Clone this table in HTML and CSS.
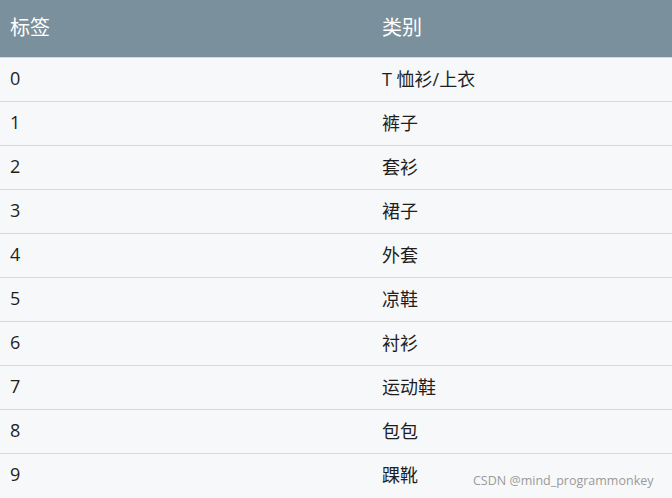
FILE: index.html
```html
<!DOCTYPE html>
<html lang="zh">
<head>
<meta charset="utf-8">
<link rel="stylesheet" href="styles.css">
</head>
<body>
<div class="table">
  <div class="row head"><div class="c1">标签</div><div class="c2">类别</div></div>
  <div class="row"><div class="c1">0</div><div class="c2">T 恤衫/上衣</div></div>
  <div class="row"><div class="c1">1</div><div class="c2">裤子</div></div>
  <div class="row"><div class="c1">2</div><div class="c2">套衫</div></div>
  <div class="row"><div class="c1">3</div><div class="c2">裙子</div></div>
  <div class="row"><div class="c1">4</div><div class="c2">外套</div></div>
  <div class="row"><div class="c1">5</div><div class="c2">凉鞋</div></div>
  <div class="row"><div class="c1">6</div><div class="c2">衬衫</div></div>
  <div class="row"><div class="c1">7</div><div class="c2">运动鞋</div></div>
  <div class="row"><div class="c1">8</div><div class="c2">包包</div></div>
  <div class="row last"><div class="c1">9</div><div class="c2">踝靴</div><span class="wm">CSDN @mind_programmonkey</span></div>
</div>
</body>
</html>
```
FILE: styles.css
```css
html, body {
  margin: 0;
  padding: 0;
  background: #f7f8fa;
}
.table {
  width: 672px;
  font-family: "Open Sans", "Noto Sans CJK SC", sans-serif;
  color: #1e1e1e;
}
.row {
  position: relative;
  display: grid;
  grid-template-columns: 372px 300px;
  height: 43px;
  align-items: center;
  border-bottom: 1px solid #d6d8db;
  font-size: 18px;
  background: #f7f8fa;
}
.row > div {
  padding-left: 10px;
  padding-bottom: 4px;
}
.row.head {
  height: 57px;
  background: #7a909c;
  color: #fff;
  font-size: 20px;
  border-bottom: 1px solid #d6d8db;
}
.row.last {
  border-bottom: none;
  height: 44px;
}
.wm {
  position: absolute;
  left: 473px;
  top: 18px;
  font-size: 12.5px;
  color: #9a9a9a;
  font-family: "Open Sans", sans-serif;
}
```
